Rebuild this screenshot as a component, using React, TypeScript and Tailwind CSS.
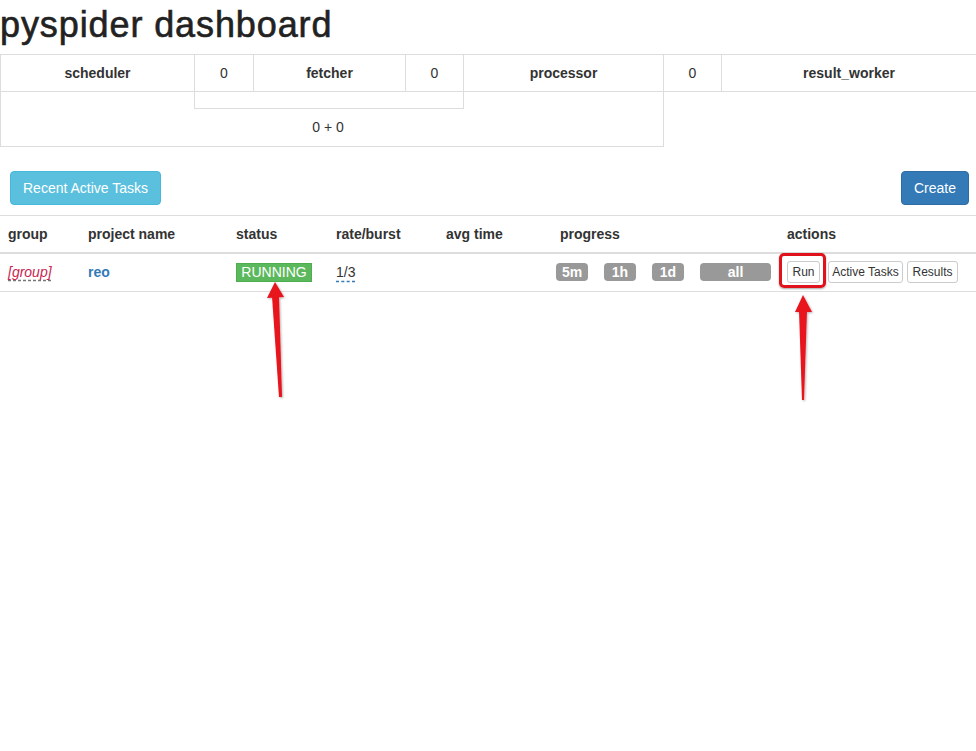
const font = "font-['Liberation_Sans','Helvetica_Neue',Arial,sans-serif]";

const TopStats = () => {
  const cells: [string, number, boolean][] = [
    ['scheduler', 194, true],
    ['0', 59, false],
    ['fetcher', 152, true],
    ['0', 58, false],
    ['processor', 200, true],
    ['0', 58, false],
    ['result_worker', 255, true],
  ];
  return (
    <div>
      <div className="flex h-[38px] border-y border-[#ddd]">
        {cells.map(([label, w, bold], i) => (
          <div
            key={i}
            style={{ width: w }}
            className={`flex items-center justify-center border-l border-[#ddd] ${bold ? 'font-bold' : ''}`}
          >
            {label}
          </div>
        ))}
      </div>
      <div className="w-[664px] h-[55px] border-x border-b border-[#ddd] flex flex-col">
        <div className="ml-[193px] w-[270px] h-[17px] border-x border-b border-[#ddd]" />
        <div className="flex-1 flex items-center justify-center pr-[8px]">0 + 0</div>
      </div>
    </div>
  );
};

const Badge = ({ children, w }: { children: string; w: string }) => (
  <span className={`inline-flex items-center justify-center h-[18px] ${w} rounded-[4px] bg-[#999] text-white text-[14px] font-bold`}>
    {children}
  </span>
);

const SmallBtn = ({ children, w }: { children: string; w: string }) => (
  <span className={`inline-flex items-center justify-center h-[22px] ${w} rounded-[3px] border border-[#ccc] bg-white text-[12px] text-[#333]`}>
    {children}
  </span>
);

const ProjectTable = () => (
  <table className="w-[976px] table-fixed border-collapse">
    <colgroup>
      <col className="w-[80px]" />
      <col className="w-[148px]" />
      <col className="w-[100px]" />
      <col className="w-[110px]" />
      <col className="w-[114px]" />
      <col className="w-[227px]" />
      <col className="w-[197px]" />
    </colgroup>
    <thead>
      <tr className="border-t border-b-2 border-[#ddd] text-left">
        {['group', 'project name', 'status', 'rate/burst', 'avg time', 'progress', 'actions'].map((h) => (
          <th key={h} className="px-[8px] py-[8px] leading-[20px] font-bold">
            {h}
          </th>
        ))}
      </tr>
    </thead>
    <tbody>
      <tr className="border-b border-[#ddd] h-[38px]">
        <td className="px-[8px]">
          <span className="italic text-[#c7254e] underline decoration-dashed decoration-[#777] underline-offset-[3px]">[group]</span>
        </td>
        <td className="px-[8px] font-bold text-[#337ab7]">reo</td>
        <td className="px-[8px]">
          <span className="inline-flex items-center justify-center h-[19px] w-[76px] bg-[#5cb85c] border border-[#4cae4c] text-white text-[14px]">
            RUNNING
          </span>
        </td>
        <td className="px-[8px]">
          <span className="underline decoration-dashed decoration-[#337ab7] underline-offset-[4px]">1/3</span>
        </td>
        <td className="px-[8px]" />
        <td className="pl-[4px]">
          <div className="flex gap-[16px]">
            <Badge w="w-[32px]">5m</Badge>
            <Badge w="w-[32px]">1h</Badge>
            <Badge w="w-[32px]">1d</Badge>
            <Badge w="w-[71px]">all</Badge>
          </div>
        </td>
        <td className="pl-[8px]">
          <div className="flex items-center">
            <span className="relative">
              <SmallBtn w="w-[33px]">Run</SmallBtn>
              <span className="absolute -left-[8px] -top-[8px] w-[47px] h-[35px] rounded-[5px] border-[3px] border-[#e0121b] shadow-[0_1px_2px_rgba(0,0,0,0.35)]" />
            </span>
            <span className="ml-[8px]">
              <SmallBtn w="w-[75px]">Active Tasks</SmallBtn>
            </span>
            <span className="ml-[4px]">
              <SmallBtn w="w-[51px]">Results</SmallBtn>
            </span>
          </div>
        </td>
      </tr>
    </tbody>
  </table>
);

const Arrows = () => (
  <svg className="absolute inset-0 pointer-events-none" width="976" height="751">
    <defs>
      <filter id="sh" x="-50%" y="-10%" width="200%" height="120%">
        <feDropShadow dx="1" dy="1" stdDeviation="1" floodColor="#000" floodOpacity="0.3" />
      </filter>
    </defs>
    <g fill="#e8131b" filter="url(#sh)">
      <polygon points="275,282 267,298 284,297" />
      <polygon points="272,296 279,296 282,397 279,397" />
      <polygon points="803,295 795,312 812,312" />
      <polygon points="799,310 807,310 804,400 802,400" />
    </g>
  </svg>
);

export default function App() {
  return (
    <div className={`relative w-[976px] h-[751px] bg-white text-[#333] text-[14px] ${font}`}>
      <h1 className="h-[54px] pt-[5px] text-[36px] leading-[40px] tracking-[0.9px] text-[#222] [-webkit-text-stroke:0.6px_#222]">
        pyspider dashboard
      </h1>
      <TopStats />
      <div className="flex justify-between pt-[24px] pb-[10px] pl-[10px] pr-[7px]">
        <button className="h-[34px] px-[12px] rounded-[4px] bg-[#5bc0de] border border-[#46b8da] text-white text-[14px]">
          Recent Active Tasks
        </button>
        <button className="h-[34px] px-[12px] rounded-[4px] bg-[#337ab7] border border-[#2e6da4] text-white text-[14px]">
          Create
        </button>
      </div>
      <ProjectTable />
      <Arrows />
    </div>
  );
}
